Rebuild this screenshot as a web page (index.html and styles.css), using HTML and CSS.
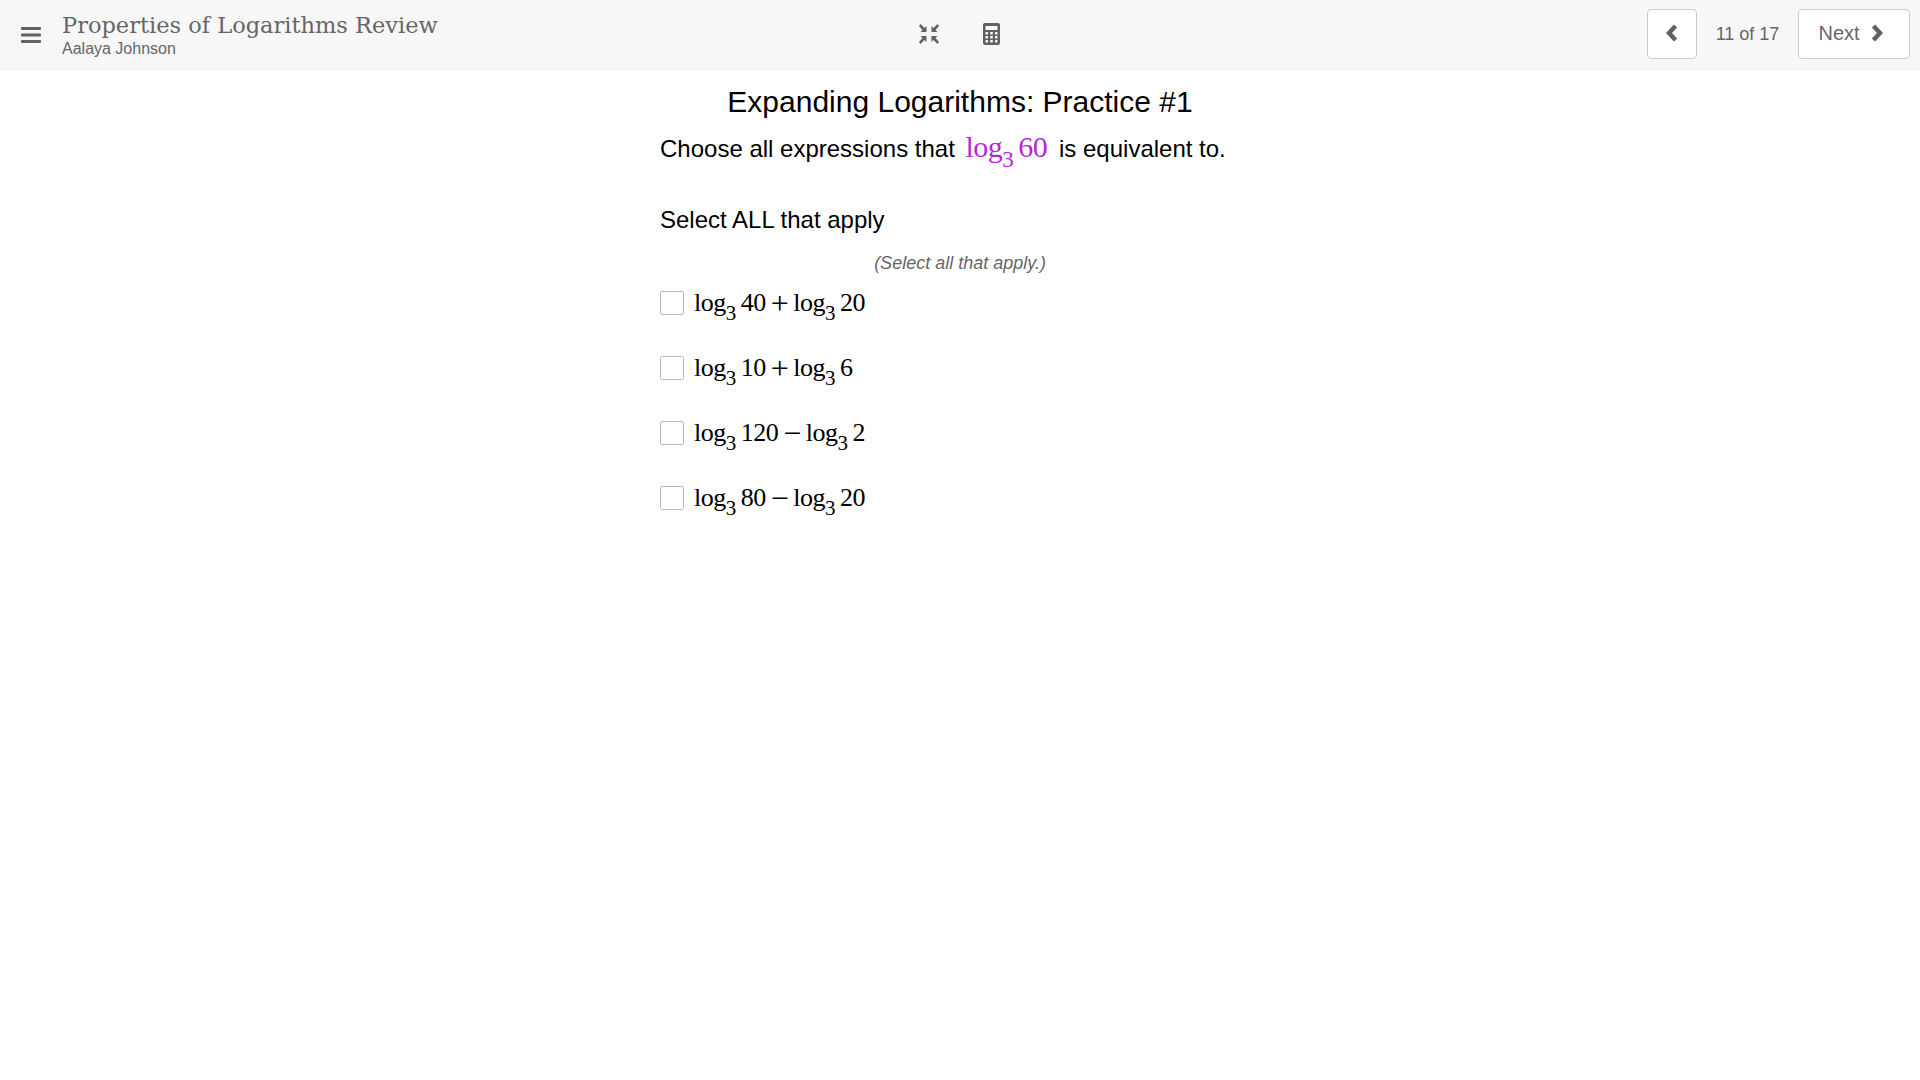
FILE: index.html
```html
<!DOCTYPE html>
<html lang="en">
<head>
    <meta charset="UTF-8">
    <title>Properties of Logarithms Review</title>
    <link rel="stylesheet" href="styles.css">
</head>
<body>
    <header class="topbar">
        <div class="topbar-left">
            <svg class="icon-menu" viewBox="0 0 20 16" width="20" height="16">
                <rect x="0" y="0" width="20" height="3" rx="1"/>
                <rect x="0" y="6.5" width="20" height="3" rx="1"/>
                <rect x="0" y="13" width="20" height="3" rx="1"/>
            </svg>
            <div class="lesson">
                <div class="lesson-title">Properties of Logarithms Review</div>
                <div class="lesson-student">Aalaya Johnson</div>
            </div>
        </div>
        <div class="topbar-tools">
            <svg class="icon-tool" viewBox="0 0 20 20" width="20" height="20">
                <path d="M1.5 0L5.5 4L7.5 2V8H1.5L3.5 6L0 2Z"/>
                <path d="M18.5 0L14.500 4L12.500 2V8H18.500L16.500 6L20 2Z"/>
                <path d="M1.500 20L5.500 16L7.500 18V12H1.500L3.500 14L0 18Z"/>
                <path d="M18.500 20L14.500 16L12.500 18V12H18.500L16.500 14L20 18Z"/>
            </svg>
            <svg class="icon-tool" viewBox="0 0 17 22" width="17" height="22">
                <path fill-rule="evenodd" d="M2 0H15A2 2 0 0 1 17 2V20A2 2 0 0 1 15 22H2A2 2 0 0 1 0 20V2A2 2 0 0 1 2 0ZM2.500 3V7H14.500V3ZM2.500 9V11.500H5V9ZM7.200 9V11.500H9.800V9ZM12 9V11.500H14.500V9ZM2.500 13V15.500H5V13ZM7.200 13V15.500H9.800V13ZM12 13V15.500H14.500V13ZM2.500 17V19.500H5V17ZM7.200 17V19.500H9.800V17ZM12 17V19.500H14.500V17Z"/>
            </svg>
        </div>
        <nav class="topbar-nav">
            <button class="nav-btn nav-prev">
                <svg class="icon-chevron" viewBox="0 0 12 18" width="12" height="18"><path d="M9.500 2L3 9L9.500 16" /></svg>
            </button>
            <span class="nav-count">11 of 17</span>
            <button class="nav-btn nav-next">
                Next
                <svg class="icon-chevron" viewBox="0 0 12 18" width="12" height="18"><path d="M2.500 2L9 9L2.500 16" /></svg>
            </button>
        </nav>
    </header>

    <main class="question">
        <h1 class="question-title">Expanding Logarithms: Practice #1</h1>
        <p class="question-text">Choose all expressions that <span class="math math-purple">log<sub>3</sub> 60</span> is equivalent to.</p>
        <p class="question-prompt">Select ALL that apply</p>
        <p class="question-hint">(Select all that apply.)</p>
        <ul class="choices">
            <li class="choice"><span class="checkbox"></span><span class="math">log<sub>3</sub> 40 <span class="op">+</span> log<sub>3</sub> 20</span></li>
            <li class="choice"><span class="checkbox"></span><span class="math">log<sub>3</sub> 10 <span class="op">+</span> log<sub>3</sub> 6</span></li>
            <li class="choice"><span class="checkbox"></span><span class="math">log<sub>3</sub> 120 <span class="op">−</span> log<sub>3</sub> 2</span></li>
            <li class="choice"><span class="checkbox"></span><span class="math">log<sub>3</sub> 80 <span class="op">−</span> log<sub>3</sub> 20</span></li>
        </ul>
    </main>
</body>
</html>
```

FILE: styles.css
```css
body {
    margin: 0;
    background-color: #fff;
    color: #000;
    font-family: "Liberation Sans", Arial, sans-serif;
}
.topbar {
    position: relative;
    display: flex;
    align-items: center;
    justify-content: space-between;
    height: 69px;
    background-color: #f7f7f7;
    border-bottom: 1px solid #eee;
    color: #666;
}
.topbar-left {
    display: flex;
    align-items: center;
    padding-left: 21px;
}
.icon-menu {
    fill: #616161;
}
.lesson {
    margin-left: 21px;
    padding-top: 1px;
}
.lesson-title {
    font-family: "DejaVu Serif", serif;
    font-size: 22.5px;
    line-height: 26px;
    color: #666;
}
.lesson-student {
    font-size: 16px;
    line-height: 21px;
}
.topbar-tools {
    position: absolute;
    left: 919px;
    top: 23px;
    display: flex;
    align-items: center;
    gap: 44px;
}
.icon-tool {
    fill: #616161;
}
.topbar-nav {
    display: flex;
    align-items: center;
    padding-right: 10px;
}
.nav-btn {
    display: flex;
    align-items: center;
    justify-content: center;
    height: 50px;
    margin-bottom: 1px;
    background-color: #fff;
    border: 1px solid #ccc;
    border-radius: 4px;
    color: #666;
    font-family: inherit;
    font-size: 20px;
    padding: 0 0 2px;
}
.nav-prev {
    width: 50px;
}
.nav-next {
    width: 112px;
    gap: 11px;
    padding-right: 7px;
}
.nav-count {
    width: 101px;
    text-align: center;
    font-size: 18px;
}
.icon-chevron {
    fill: none;
    stroke: #616161;
    stroke-width: 4.5;
}
.question {
    width: 600px;
    margin: 0 auto;
}
.question-title {
    margin: 14px 0 0;
    font-size: 30px;
    font-weight: normal;
    line-height: 36px;
    text-align: center;
}
.question-text {
    margin: 7px 0 0;
    font-size: 24px;
    line-height: 40px;
}
.question-prompt {
    margin: 36px 0 0;
    font-size: 24px;
    line-height: 30px;
}
.question-hint {
    margin: 19px 0 0;
    font-size: 18px;
    font-style: italic;
    line-height: 18px;
    text-align: center;
    color: #666;
}
.math {
    font-family: "Liberation Serif", serif;
    font-size: 26px;
    letter-spacing: -0.5px;
    word-spacing: -1px;
    white-space: nowrap;
}
.math sub {
    font-size: 21px;
    line-height: 0;
    vertical-align: -9px;
}
.math .op {
    font-size: 32px;
    line-height: 0;
    vertical-align: -3px;
}
.math-purple {
    font-size: 30px;
    color: #b22bd6;
    margin: 0 5px 0 4px;
    word-spacing: -2px;
}
.math-purple sub {
    font-size: 23px;
    vertical-align: -10px;
}
.choices {
    display: flex;
    flex-direction: column;
    gap: 25px;
    list-style: none;
    margin: 11px 0 0;
    padding: 0;
}
.choice {
    display: flex;
    align-items: center;
    gap: 10px;
    height: 40px;
}
.checkbox {
    width: 22px;
    height: 22px;
    background-color: #fff;
    border: 1px solid #bbb;
    border-radius: 2px;
}
```
